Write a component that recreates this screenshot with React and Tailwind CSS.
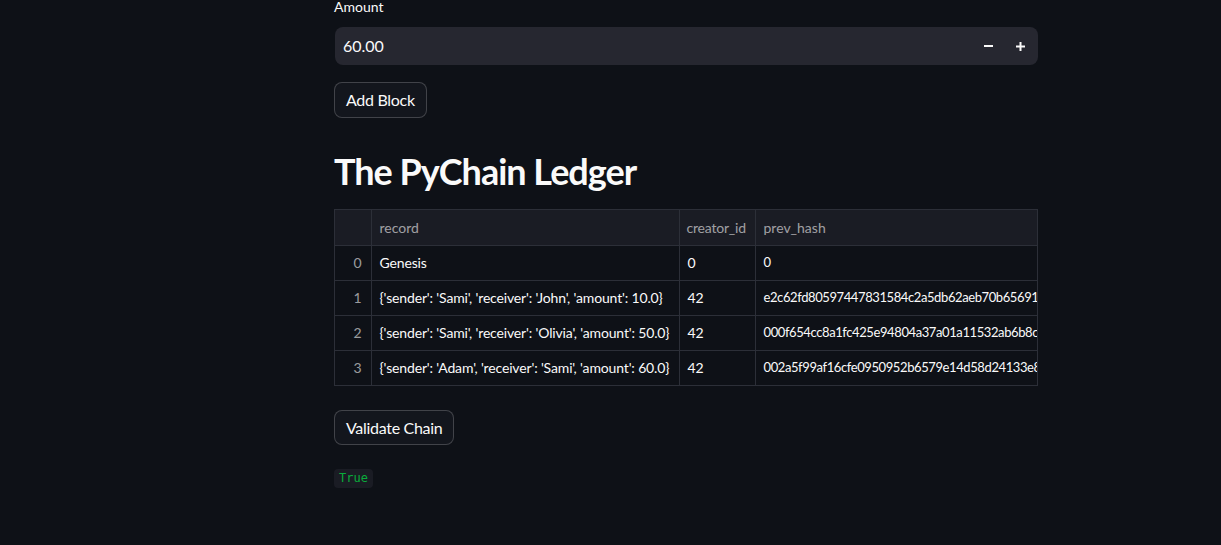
import React from "react";

const rows = [
  ["0", "Genesis", "0", "0"],
  ["1", "{'sender': 'Sami', 'receiver': 'John', 'amount': 10.0}", "42", "e2c62fd80597447831584c2a5db62aeb70b65691a3f1b0e7c4a0f2e9d8c7b6a5"],
  ["2", "{'sender': 'Sami', 'receiver': 'Olivia', 'amount': 50.0}", "42", "000f654cc8a1fc425e94804a37a01a11532ab6b8c0f2d4e6a8b1c3d5e7f9a0b2"],
  ["3", "{'sender': 'Adam', 'receiver': 'Sami', 'amount': 60.0}", "42", "002a5f99af16cfe0950952b6579e14d58d24133e8a1b2c3d4e5f60718293a4b5"],
];

export default function App() {
  const font = { fontFamily: "Lato, 'Noto Sans', sans-serif" };
  return (
    <div className="min-h-[545px] w-full bg-[#0e1117] text-[#fafafa]" style={font}>
      <div className="ml-[334px] w-[704px] flex flex-col">
        <div className="text-[14px] leading-[14px] h-[27px]">Amount</div>
        <div className="h-[38px] w-[703px] ml-[1px] rounded-[8px] bg-[#262730] flex items-center pl-[8px] pr-[2px]">
          <span className="text-[16px] flex-1">60.00</span>
          <span className="w-[32px] flex justify-center">
            <svg width="9" height="2" viewBox="0 0 9 2"><rect width="9" height="2" fill="#fafafa" /></svg>
          </span>
          <span className="w-[32px] flex justify-center">
            <svg width="9" height="9" viewBox="0 0 9 9"><rect y="3.5" width="9" height="2" fill="#fafafa" /><rect x="3.5" width="2" height="9" fill="#fafafa" /></svg>
          </span>
        </div>
        <div className="mt-[17px]">
          <button className="h-[36px] px-[11px] rounded-[8px] border border-[rgba(250,250,250,0.2)] bg-[#13161d] text-[16px] tracking-[-0.3px] text-[#fafafa]">Add Block</button>
        </div>
        <h2 className="mt-[31px] text-[36px] font-bold leading-[44px] tracking-[-1px]">The PyChain Ledger</h2>
        <div className="mt-[16px] w-[704px] overflow-hidden border border-[#2c2f38]">
          <table className="border-collapse text-[14px] whitespace-nowrap table-fixed" style={{ width: 1000 }}>
            <colgroup>
              <col style={{ width: 36 }} />
              <col style={{ width: 308 }} />
              <col style={{ width: 76 }} />
              <col style={{ width: 580 }} />
            </colgroup>
            <thead>
              <tr className="h-[35px] bg-[#1a1c24] text-[rgba(250,250,250,0.6)]">
                <th className="border-r border-b border-[#2c2f38]"></th>
                <th className="border-r border-b border-[#2c2f38] text-left font-normal px-[8px]">record</th>
                <th className="border-r border-b border-[#2c2f38] text-left font-normal px-[7px] tracking-[-0.2px]">creator_id</th>
                <th className="border-b border-[#2c2f38] text-left font-normal px-[8px]">prev_hash</th>
              </tr>
            </thead>
            <tbody>
              {rows.map((r, i) => (
                <tr key={i} className="h-[35px]">
                  <td className={`border-r border-[#2c2f38] text-right pr-[9px] text-[rgba(250,250,250,0.6)] ${i < 3 ? "border-b" : ""}`}>{r[0]}</td>
                  <td className={`border-r border-[#2c2f38] px-[8px] tracking-[-0.15px] ${i < 3 ? "border-b" : ""}`}>{r[1]}</td>
                  <td className={`border-r border-[#2c2f38] px-[8px] ${i < 3 ? "border-b" : ""}`}>{r[2]}</td>
                  <td className={`border-[#2c2f38] px-[8px] text-[13px] tracking-[-0.4px] ${i < 3 ? "border-b" : ""}`}>{r[3]}</td>
                </tr>
              ))}
            </tbody>
          </table>
        </div>
        <div className="mt-[24px]">
          <button className="h-[35px] px-[11px] rounded-[8px] border border-[rgba(250,250,250,0.2)] bg-[#13161d] text-[16px] tracking-[-0.3px] text-[#fafafa]">Validate Chain</button>
        </div>
        <div className="mt-[19px]">
          <code className="inline-block rounded-[4px] bg-[#1a1c24] px-[5px] py-[2px] text-[12px] leading-[15px] text-[#09ab3b]" style={{ fontFamily: "'DejaVu Sans Mono', 'Liberation Mono', monospace" }}>True</code>
        </div>
      </div>
    </div>
  );
}
